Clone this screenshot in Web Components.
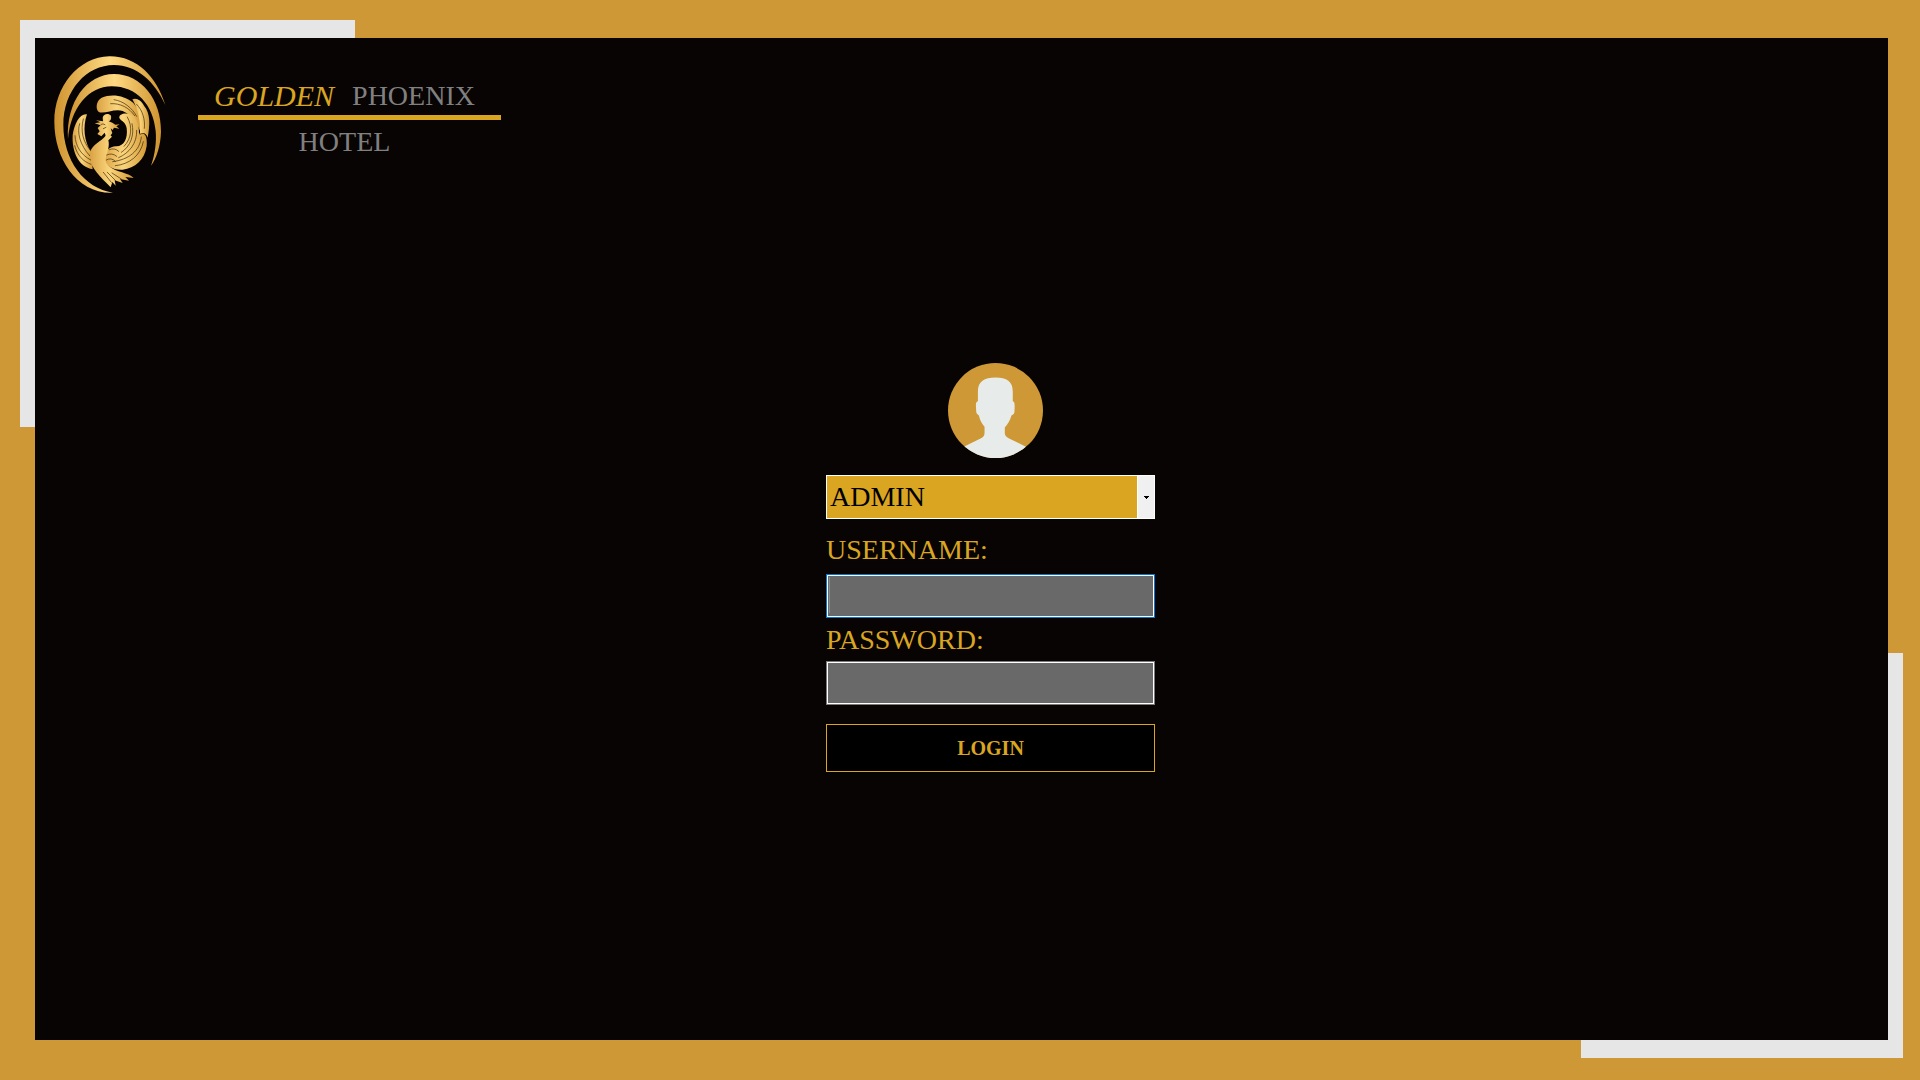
<!DOCTYPE html>
<html lang="en">
<head>
<meta charset="utf-8">
<title>Golden Phoenix Hotel</title>
<style>
  html, body { margin: 0; height: 100%; }
  body {
    --gold: #daa520;
    --frame: #cd9835;
    --ink: #080403;
    --serif: "Palatino Linotype", "Liberation Serif", serif;
    font-family: var(--serif);
    font-size: 28px;
    line-height: 32px;
  }
</style>
</head>
<body>
<app-frame>
  <hotel-brand></hotel-brand>
  <login-form></login-form>
</app-frame>

<script>
const attach = (el, html) => { el.attachShadow({ mode: "open" }).innerHTML = html; };

customElements.define("app-frame", class extends HTMLElement {
  constructor() {
    super();
    attach(this, `
      <style>
        :host { display: flex; position: relative; box-sizing: border-box; min-height: 100vh;
                padding: 38px 32px 40px 35px; background: var(--frame); }
        .corner { position: absolute; background: #e6e6e6; }
        .tl { left: 20px; top: 20px; width: 335px; height: 407px; }
        .br { right: 17px; bottom: 22px; width: 322px; height: 405px; }
        main { position: relative; flex: 1; display: flex; flex-direction: column; background: var(--ink); }
      </style>
      <div class="corner tl"></div>
      <div class="corner br"></div>
      <main><slot></slot></main>`);
  }
});

customElements.define("phoenix-logo", class extends HTMLElement {
  constructor() {
    super();
    attach(this, `
      <style>:host { display: block; } svg { display: block; width: 140px; height: 160px; }</style>
      <svg viewBox="0 0 420 480" role="img" aria-label="Phoenix emblem">
        <defs>
          <linearGradient id="ring" x1="0" x2="1" y1="0" y2="0">
            <stop offset="0" stop-color="#cf932f"/><stop offset=".5" stop-color="#ffda82"/><stop offset="1" stop-color="#cf932f"/>
          </linearGradient>
          <linearGradient id="wing" x1="0" x2="1" y1="0" y2="0">
            <stop offset="0" stop-color="#d9a243"/><stop offset=".45" stop-color="#fbd57b"/><stop offset="1" stop-color="#d39a38"/>
          </linearGradient>
        </defs>
        <g fill="url(#ring)">
          <path d="M376 180C350 95 290 33 208 34C115 36 43 125 43 230C43 340 110 447 219 443C132 430 70 345 70 240C70 135 140 60 222 60C290 60 345 110 376 180Z"/>
          <path d="M84 282C78 170 140 88 222 87C305 87 364 165 363 260C362 300 350 340 333 362C345 330 350 290 347 258C340 180 290 124 215 124C145 124 92 190 84 282Z"/>
        </g>
        <g fill="url(#wing)">
          <path d="M178 202C166 194 167 168 185 158C215 145 255 152 280 174C302 200 308 232 304 268C294 240 280 212 248 198C225 190 198 206 178 202Z"/>
          <path d="M277 163C290 157 305 168 312 182C332 205 330 240 323 278C318 264 310 262 300 268C302 230 295 195 277 163Z"/>
          <path d="M238 219C236 204 265 201 282 214C294 232 298 252 297 266C314 258 323 275 320 303C314 345 285 370 248 374C220 376 196 362 190 342C194 318 208 305 228 304C252 305 264 280 260 250C257 230 244 230 238 219Z"/>
          <path d="M141 208C120 204 103 235 98 270C95 325 118 365 158 373L154 322C132 290 128 245 141 208Z"/>
          <path d="M201 262C198 288 149 294 149 334C151 371 183 397 212 427L217 411L227 422L224 406L248 414L240 402L267 407L256 396L281 399C264 382 230 383 207 364C182 342 213 320 205 286L216 275Z"/>
          <path d="M188 218C190 207 205 203 213 212C215 222 211 228 206 229L217 233L226 239L239 238L229 244L238 251L222 248L218 255L212 250L217 264L209 275L202 286L194 263L184 274L172 267L179 259L173 249L182 241L164 235L181 232L168 226L189 229Z"/>
        </g>
        <g fill="none" stroke="#3a250c" stroke-width="2" stroke-linecap="round">
          <path d="M212 176C240 174 268 188 284 212M222 164C250 168 276 188 290 214M290 178C308 196 316 224 313 250M300 268Q312 260 321 273"/>
          <path d="M119 236C110 262 120 300 149 332M105 272C106 304 124 330 152 345M104 302C112 332 130 350 153 358M130 222C120 258 130 292 150 314"/>
          <path d="M276 236C284 270 272 304 244 322M290 256C292 294 268 324 236 338M304 276C300 318 266 344 218 350M310 290C302 332 268 358 226 362M262 216C278 244 276 280 252 304"/>
          <path d="M208 314Q224 307 236 319M200 330Q216 322 230 334M199 345Q214 336 226 349"/>
          <path d="M190 382L214 412M202 382L226 406M216 384L244 402M183 238Q189 234 195 239M190 251L198 247"/>
        </g>
      </svg>`);
  }
});

customElements.define("hotel-brand", class extends HTMLElement {
  constructor() {
    super();
    attach(this, `
      <style>
        :host { display: block; }
        header { display: flex; gap: 18px; padding: 7px 5px 0; color: #808080; }
        .name { display: flex; flex-direction: column; gap: 6px; padding-top: 35px; margin: 0; font: inherit; }
        .row { display: flex; gap: 18px; justify-content: center; box-sizing: border-box; width: 303px;
               padding: 0 10px 3px 0; }
        .first { border-bottom: 5px solid var(--gold); }
        em { color: var(--gold); font-size: 30px; }
      </style>
      <header>
        <phoenix-logo></phoenix-logo>
        <h1 class="name">
          <span class="row first"><em>GOLDEN</em><span>PHOENIX</span></span>
          <span class="row">HOTEL</span>
        </h1>
      </header>`);
  }
});

customElements.define("user-avatar", class extends HTMLElement {
  constructor() {
    super();
    attach(this, `
      <style>:host { display: block; } svg { display: block; width: 95px; height: 95px; }</style>
      <svg viewBox="54 38 286 286" aria-hidden="true">
        <defs><clipPath id="disc"><circle cx="197" cy="181" r="143"/></clipPath></defs>
        <circle cx="197" cy="181" r="143" fill="#cd9835"/>
        <path clip-path="url(#disc)" fill="#e7eceb" d="M144 153V124C144 94 163 82 197 82C231 82 249 94 249 124V153C256 155 255 165 254 186C252 193 248 194 245 196C241 212 232 225 225 232V250C226 258 231 261 238 265L290 291V330H100V291L155 264C161 260 164 256 164 248V230C157 222 150 211 147 196C144 193 139 192 139 184C138 166 136 155 144 153Z"/>
      </svg>`);
  }
});

customElements.define("role-select", class extends HTMLElement {
  constructor() {
    super();
    attach(this, `
      <style>
        :host { display: grid; grid-template-columns: 1fr 18px; height: 44px; }
        select { grid-area: 1 / 1 / 2 / 3; appearance: none; box-sizing: border-box; width: 100%; height: 100%; margin: 0;
                 padding: 0 20px 0 3px; border: 1px solid #fff; border-radius: 0;
                 background: var(--gold); color: #000; font: inherit; outline: 0; }
        .arrow { grid-area: 1 / 2; display: grid; place-items: center; pointer-events: none;
                 background: #f0f0f0; border: 1px solid #fff; }
        svg { width: 5px; height: 3px; }
      </style>
      <select aria-label="Role"><option>ADMIN</option></select>
      <span class="arrow"><svg viewBox="0 0 5 3" shape-rendering="crispEdges" aria-hidden="true"><path d="M0 0H5V1H4V2H3V3H2V2H1V1H0Z"/></svg></span>`);
  }
});

customElements.define("text-field", class extends HTMLElement {
  constructor() {
    super();
    const type = this.getAttribute("type") || "text";
    attach(this, `
      <style>
        :host { display: flex; flex-direction: column; gap: var(--label-gap, 5px); }
        label { color: var(--gold); }
        input { box-sizing: border-box; width: 100%; height: 44px; margin: 0; padding: 0 4px;
                border: 1px solid #7a7a7a; border-radius: 0; outline: 1px solid #fff; outline-offset: -2px;
                background: #696969; color: #000; font: inherit; }
        :host([active]) input { border-color: #0078d7;
                background: linear-gradient(#8c8c8c, #8c8c8c) 2px 2px / 1px 36px no-repeat #696969; }
      </style>
      <label for="field"><slot></slot></label>
      <input id="field" type="${type}">`);
  }
});

customElements.define("login-form", class extends HTMLElement {
  constructor() {
    super();
    attach(this, `
      <style>
        :host { display: block; align-self: center; margin-top: 158px; padding-left: 58px; }
        form { display: flex; flex-direction: column; width: 329px; margin: 0; }
        user-avatar { align-self: center; padding-left: 10px; margin-bottom: 17px; }
        role-select { margin-bottom: 15px; }
        text-field { margin-bottom: 6px; }
        text-field[active] { --label-gap: 8px; }
        button { height: 48px; margin: 13px 0 0; padding: 0; border: 1px solid var(--gold); border-radius: 0;
                 background: #000; color: var(--gold); font: bold 20px/24px var(--serif); }
      </style>
      <form>
        <user-avatar></user-avatar>
        <role-select></role-select>
        <text-field active>USERNAME:</text-field>
        <text-field type="password">PASSWORD:</text-field>
        <button type="button">LOGIN</button>
      </form>`);
  }
});
</script>
</body>
</html>
